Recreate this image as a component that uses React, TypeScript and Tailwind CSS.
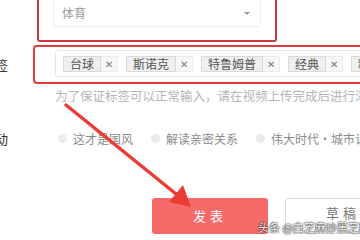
import React from 'react'

const tags = ['台球', '斯诺克', '特鲁姆普', '经典', '精彩']
const topics = ['这才是国风', '解读亲密关系', '伟大时代·城市记忆']

export default function App() {
  return (
    <div className="relative h-[240px] w-[360px] overflow-hidden bg-white font-['Noto_Sans_CJK_SC',sans-serif]">
      {/* Category select (highlighted) */}
      <div className="ml-[37px] mt-[-16px] h-[58px] w-[240px] rounded-[3px] border-2 border-[#c8383b] px-[14px] pt-[5px]">
        <div className="flex h-[36px] items-center justify-between rounded-[3px] border border-[#ececec] bg-white pl-[8px] pr-[10px] pt-[8px]">
          <span className="text-[12px] text-[#9a9a9a]">体育</span>
          <span className="h-0 w-0 border-x-[3px] border-t-[3px] border-x-transparent border-t-[#999]" />
        </div>
      </div>

      {/* Tags row */}
      <div className="mt-[3px] flex items-center">
        <div className="ml-[-18px] w-[51px] shrink-0 whitespace-nowrap text-[13px] text-[#333]">标签</div>
        <div className="h-[39px] w-[340px] shrink-0 rounded-[4px] border-2 border-[#e23a3e] pl-[20px] pt-[3px]">
          <div className="flex h-[27px] items-center gap-[8px] overflow-hidden whitespace-nowrap rounded-[3px] border border-[#e6e6e6] pl-[7px]">
            {tags.map((t) => (
              <div key={t} className="flex h-[16px] shrink-0 items-stretch text-[12px] leading-[14px]">
                <span className="border border-[#d9d9d9] bg-[#efefef] px-[6px] text-[#555]">{t}</span>
                <span className="flex w-[17px] items-center justify-center border border-l-0 border-[#ececec] bg-[#f7f7f7] text-[10px] text-[#777]">✕</span>
              </div>
            ))}
          </div>
        </div>
      </div>

      {/* Hint */}
      <div className="ml-[55px] mt-[3px] whitespace-nowrap text-[12.5px] leading-[18px] text-[#b5b5b5]">
        为了保证标签可以正常输入，请在视频上传完成后进行添加
      </div>

      {/* Topic radios */}
      <div className="mt-[24px] flex items-center whitespace-nowrap">
        <div className="ml-[-18px] w-[76px] shrink-0 text-[13px] text-[#333]">活动</div>
        <div className="flex items-center gap-[18px]">
          {topics.map((t) => (
            <div key={t} className="flex items-center gap-[6px]">
              <span className="h-[9px] w-[9px] rounded-full bg-[#ececec]" />
              <span className="text-[12px] text-[#8a8a8a]">{t}</span>
            </div>
          ))}
        </div>
      </div>

      {/* Buttons */}
      <div className="ml-[152px] mt-[49px] flex gap-[17px]">
        <div className="flex h-[36px] w-[116px] shrink-0 items-center justify-center rounded-[3px] bg-[#f76a6a] text-[13px] tracking-[4px] text-white">
          发表
        </div>
        <div className="flex h-[36px] w-[116px] shrink-0 items-center justify-center rounded-[3px] border border-[#dcdcdc] bg-white pb-[6px] text-[13px] tracking-[4px] text-[#777]">
          草稿
        </div>
      </div>

      {/* Annotation arrow */}
      <svg className="pointer-events-none absolute left-0 top-0" width="360" height="240" viewBox="0 0 360 240">
        <line x1="66" y1="105" x2="181" y2="198" stroke="#ee3a34" strokeWidth="3.5" strokeLinecap="round" />
        <polygon points="191,207 183,185 169,202" fill="#ee3a34" />
      </svg>

      {/* Watermark */}
      <div className="absolute left-[258px] top-[221px] whitespace-nowrap text-[11px] leading-[12px] text-white [text-shadow:0_0_2px_#000,0_0_1px_#000]">
        头条 @白芝麻炒黑芝麻
      </div>
    </div>
  )
}
